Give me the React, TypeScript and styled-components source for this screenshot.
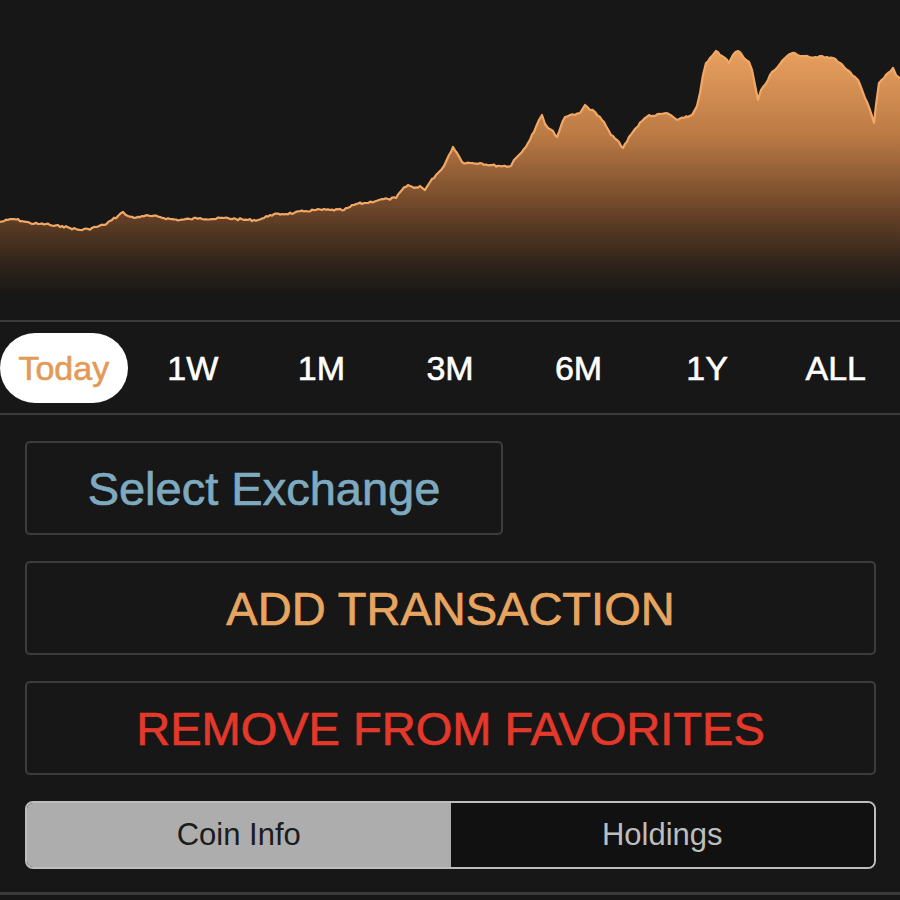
import styled, { createGlobalStyle } from 'styled-components';

const GlobalStyle = createGlobalStyle`
  html, body {
    margin: 0;
    padding: 0;
    background: #171717;
  }
  body {
    font-family: 'Liberation Sans', Arial, Helvetica, sans-serif;
  }
`;

const Page = styled.div`
  width: 900px;
  height: 900px;
  background: #171717;
  display: flex;
  flex-direction: column;
  overflow: hidden;
`;

const ChartWrap = styled.div`
  height: 320px;
  border-bottom: 2px solid #3b3b3b;
  svg {
    display: block;
  }
`;

const RangeBar = styled.div`
  display: grid;
  grid-template-columns: repeat(7, 1fr);
  align-items: center;
  height: 91px;
  border-bottom: 2px solid #3b3b3b;
`;

const RangeTab = styled.div<{ $active?: boolean }>`
  height: 70px;
  display: flex;
  align-items: center;
  justify-content: center;
  border-radius: 35px;
  font-size: 34px;
  padding-top: 2px;
  box-sizing: border-box;
  -webkit-text-stroke: 0.6px currentColor;
  color: ${(p) => (p.$active ? '#e39a57' : '#ffffff')};
  background: ${(p) => (p.$active ? '#ffffff' : 'transparent')};
  margin-right: ${(p) => (p.$active ? '1px' : '0')};
`;

const Actions = styled.div`
  display: flex;
  flex-direction: column;
  gap: 26px;
  padding: 26px 24px 0 25px;
`;

const ActionButton = styled.div<{ $color: string; $width?: string }>`
  box-sizing: border-box;
  width: ${(p) => p.$width || '100%'};
  height: 94px;
  border: 2px solid #3d3d3d;
  border-radius: 5px;
  display: flex;
  align-items: center;
  justify-content: center;
  font-size: 47px;
  -webkit-text-stroke: 0.7px currentColor;
  color: ${(p) => p.$color};
`;

const Segmented = styled.div`
  box-sizing: border-box;
  display: grid;
  grid-template-columns: 1fr 1fr;
  height: 68px;
  border: 2px solid #bdbdbd;
  border-radius: 8px;
  overflow: hidden;
`;

const Segment = styled.div<{ $active?: boolean }>`
  display: flex;
  align-items: center;
  justify-content: center;
  font-size: 31px;
  background: ${(p) => (p.$active ? '#adadad' : '#111111')};
  color: ${(p) => (p.$active ? '#1c1c1c' : '#bdbdbd')};
`;

const BottomRule = styled.div`
  margin-top: 23px;
  border-bottom: 3px solid #3b3b3b;
`;

const anchors: [number, number][] = [
  [0, 222], [8, 220], [14, 219], [22, 221], [30, 223], [38, 224], [46, 224], [54, 226],
  [62, 226], [70, 228], [80, 230], [88, 229], [96, 227], [104, 225], [112, 220],
  [118, 216], [123, 212], [128, 216], [134, 218], [142, 216], [150, 216], [160, 217],
  [170, 219], [180, 220], [190, 219], [200, 218], [212, 219], [224, 218], [236, 219],
  [248, 220], [258, 220], [264, 218], [270, 215], [282, 214], [294, 213], [306, 211],
  [316, 210], [330, 210], [344, 210], [350, 207], [356, 204], [366, 203], [379, 200],
  [388, 199], [396, 198], [402, 190], [408, 185], [414, 188], [420, 186], [425, 190],
  [430, 182], [436, 175], [439, 172], [444, 166], [449, 155], [453, 147], [457, 153],
  [462, 162], [470, 163], [480, 163], [490, 165], [500, 166], [511, 166], [514, 160],
  [517, 157], [522, 152], [528, 143], [534, 132], [539, 120], [542, 115], [545, 124],
  [548, 128], [553, 131], [557, 137], [561, 126], [565, 117], [570, 115], [575, 115],
  [580, 113], [585, 105], [590, 110], [595, 112], [600, 117], [606, 126], [611, 135],
  [617, 140], [623, 148], [629, 137], [636, 128], [642, 121], [649, 115], [655, 116],
  [661, 114], [666, 113], [672, 116], [677, 120], [684, 118], [692, 115], [697, 106],
  [700, 93], [703, 75], [706, 63], [710, 58], [713, 55], [716, 51], [720, 55],
  [725, 58], [729, 63], [733, 55], [738, 51], [742, 55], [746, 60], [749, 62],
  [752, 70], [755, 85], [758, 100], [761, 90], [763, 87], [768, 80], [772, 72],
  [775, 70], [780, 64], [785, 58], [790, 54], [795, 53], [800, 56], [805, 56],
  [809, 57], [815, 57], [820, 56], [827, 57], [833, 58], [838, 62], [844, 67],
  [850, 72], [855, 77], [858, 80], [862, 90], [865, 98], [867, 102], [870, 110],
  [874, 123], [876, 105], [879, 83], [884, 78], [888, 73], [893, 68], [896, 75], [900, 78],
];

// fill gaps between anchors with small deterministic wiggle so the line looks like tick data
function buildPoints() {
  const out: [number, number][] = [];
  let seed = 7;
  const rand = () => {
    seed = (seed * 9301 + 49297) % 233280;
    return seed / 233280 - 0.5;
  };
  for (let i = 0; i < anchors.length - 1; i++) {
    const [x0, y0] = anchors[i];
    const [x1, y1] = anchors[i + 1];
    out.push([x0, y0]);
    const steps = Math.floor((x1 - x0) / 2);
    for (let s = 1; s < steps; s++) {
      const t = s / steps;
      out.push([x0 + (x1 - x0) * t, y0 + (y1 - y0) * t + rand() * 2.2]);
    }
  }
  out.push(anchors[anchors.length - 1]);
  return out;
}

const points = buildPoints();
const linePath = points
  .map(([x, y], i) => `${i === 0 ? 'M' : 'L'}${x.toFixed(1)},${y.toFixed(1)}`)
  .join(' ');
const areaPath = `${linePath} L900,320 L0,320 Z`;

const ranges = ['Today', '1W', '1M', '3M', '6M', '1Y', 'ALL'];

function PriceChart() {
  return (
    <ChartWrap>
      <svg width="900" height="320" viewBox="0 0 900 320">
        <defs>
          <linearGradient id="fillGrad" x1="0" y1="50" x2="0" y2="295" gradientUnits="userSpaceOnUse">
            <stop offset="0" stopColor="#e8a05f" />
            <stop offset="0.35" stopColor="#bb7a44" />
            <stop offset="0.65" stopColor="#6c4529" />
            <stop offset="0.85" stopColor="#34261b" />
            <stop offset="1" stopColor="#171717" />
          </linearGradient>
        </defs>
        <path d={areaPath} fill="url(#fillGrad)" />
        <path d={linePath} fill="none" stroke="#f2a865" strokeWidth="2.2" strokeLinejoin="round" />
      </svg>
    </ChartWrap>
  );
}

export default function App() {
  return (
    <Page>
      <GlobalStyle />
      <PriceChart />
      <RangeBar>
        {ranges.map((r, i) => (
          <RangeTab key={r} $active={i === 0}>
            {r}
          </RangeTab>
        ))}
      </RangeBar>
      <Actions>
        <ActionButton $color="#7eaac0" $width="478px">
          Select Exchange
        </ActionButton>
        <ActionButton $color="#e8a560">ADD TRANSACTION</ActionButton>
        <ActionButton $color="#e3382a">REMOVE FROM FAVORITES</ActionButton>
        <Segmented>
          <Segment $active>Coin Info</Segment>
          <Segment>Holdings</Segment>
        </Segmented>
      </Actions>
      <BottomRule />
    </Page>
  );
}
